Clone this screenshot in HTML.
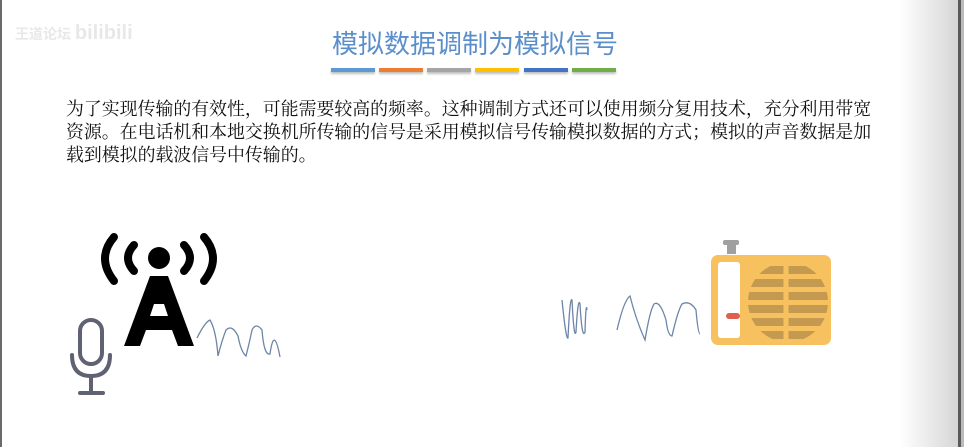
<!DOCTYPE html>
<html><head><meta charset="utf-8"><style>
html,body{margin:0;padding:0;}
body{width:964px;height:447px;position:relative;overflow:hidden;background:#fff;font-family:"Liberation Sans","Noto Sans CJK SC",sans-serif;}
.lb{position:absolute;left:0;top:0;width:2px;height:447px;background:#6a6a6a;}
.rg{position:absolute;left:900px;top:0;width:58px;height:447px;background:linear-gradient(90deg,#fff,#d6d6d6);}
.rb{position:absolute;left:958px;top:0;width:3px;height:447px;background:#5a5a5a;}
.rr{position:absolute;left:961px;top:0;width:3px;height:447px;background:#bbb;}
.title{position:absolute;left:0;width:950px;top:26px;text-align:center;font-family:"Noto Sans CJK SC",sans-serif;font-size:26px;color:#5b8fcc;line-height:34px;}
.bars{position:absolute;top:68px;left:331px;height:5px;}
.bars div{position:absolute;top:0;width:44px;height:4px;box-shadow:0 2px 2px rgba(0,0,0,.25);}
.txt{position:absolute;left:66px;top:97px;width:840px;font-family:"Noto Serif CJK SC",serif;font-size:17.9px;line-height:23px;color:#111;white-space:nowrap;}
.wm{position:absolute;left:15px;top:22px;color:#e8e8e8;font-size:14px;font-weight:bold;}
</style></head><body>
<div class="lb"></div><div class="rg"></div><div class="rb"></div><div class="rr"></div>
<div class="wm">王道论坛 <span style="font-size:20px">bilibili</span></div>
<div class="title">模拟数据调制为模拟信号</div>
<div class="bars">
<div style="left:0;background:#5b9bd5"></div>
<div style="left:48px;background:#ed7d31"></div>
<div style="left:96px;background:#a5a5a5"></div>
<div style="left:144px;background:#ffc000"></div>
<div style="left:193px;background:#4472c4"></div>
<div style="left:241px;background:#70ad47"></div>
</div>
<div class="txt">为了实现传输的有效性，可能需要较高的频率。这种调制方式还可以使用频分复用技术，充分利用带宽<br>资源。在电话机和本地交换机所传输的信号是采用模拟信号传输模拟数据的方式；模拟的声音数据是加<br>载到模拟的载波信号中传输的。</div>
<svg width="964" height="447" style="position:absolute;left:0;top:0">
<defs><clipPath id="c"><circle cx="788" cy="302" r="40"/></clipPath></defs>
<g fill="none" stroke="#000" stroke-width="8" stroke-linecap="round">
<path d="M114 237 Q96 258 114 281"/>
<path d="M134 245 Q122 258 134 271"/>
<path d="M184 245 Q196 258 184 271"/>
<path d="M204 237 Q222 258 204 281"/>
</g>
<circle cx="159" cy="258" r="11" fill="#000"/>
<path d="M150 276 L168 276 L194 346 L178 346 L172 330 L146 330 L140 346 L124 346 Z M150 316 L168 316 L164 304 L154 304 Z" fill="#000" fill-rule="evenodd"/>
<g fill="none" stroke="#5f6272" stroke-width="4" stroke-linecap="round">
<rect x="80" y="320" width="22" height="44" rx="11"/>
<path d="M72 355 Q72 376 91 376 Q110 376 110 355"/>
<path d="M91 376 V393 M80 393 H103"/>
</g>
<g fill="none" stroke="#6d86a8" stroke-width="1.3">
<path d="M197 338 Q205 322 210 320 Q216 330 218 356 Q222 340 226 330 Q232 324 238 336 Q241 352 246 356 Q250 340 252 330 Q256 322 262 330 Q264 356 270 354 Q274 325 280 357"/>
<path d="M562 300 Q566 340 568 338 Q570 296 572 300 Q574 340 576 332 Q578 296 580 304 Q582 340 585 332 Q586 300 587 310"/>
<path d="M617 330 Q624 300 630 296 Q636 320 645 340 Q650 310 654 304 Q660 300 666 320 Q668 336 672 336 Q678 310 682 304 Q690 300 696 310 Q698 334 700 334"/>
</g>
<rect x="727" y="240" width="9" height="14" fill="#a0a0a0"/>
<rect x="723" y="240" width="16" height="5" rx="2" fill="#a0a0a0"/>
<rect x="711" y="255" width="120" height="90" rx="7" fill="#f7c160"/>
<rect x="718" y="262" width="22" height="76" rx="3" fill="#fff"/>
<rect x="726" y="313" width="14" height="6" rx="3" fill="#e06050"/>
<g fill="#c49a50" clip-path="url(#c)">
<rect x="740" y="266" width="100" height="8"/><rect x="740" y="279" width="100" height="8"/><rect x="740" y="292" width="100" height="8"/><rect x="740" y="305" width="100" height="8"/><rect x="740" y="318" width="100" height="8"/><rect x="740" y="331" width="100" height="8"/>
</g>
<g stroke="#f7c160" stroke-width="5"><path d="M786 258 V345"/></g>
</svg>
</body></html>
